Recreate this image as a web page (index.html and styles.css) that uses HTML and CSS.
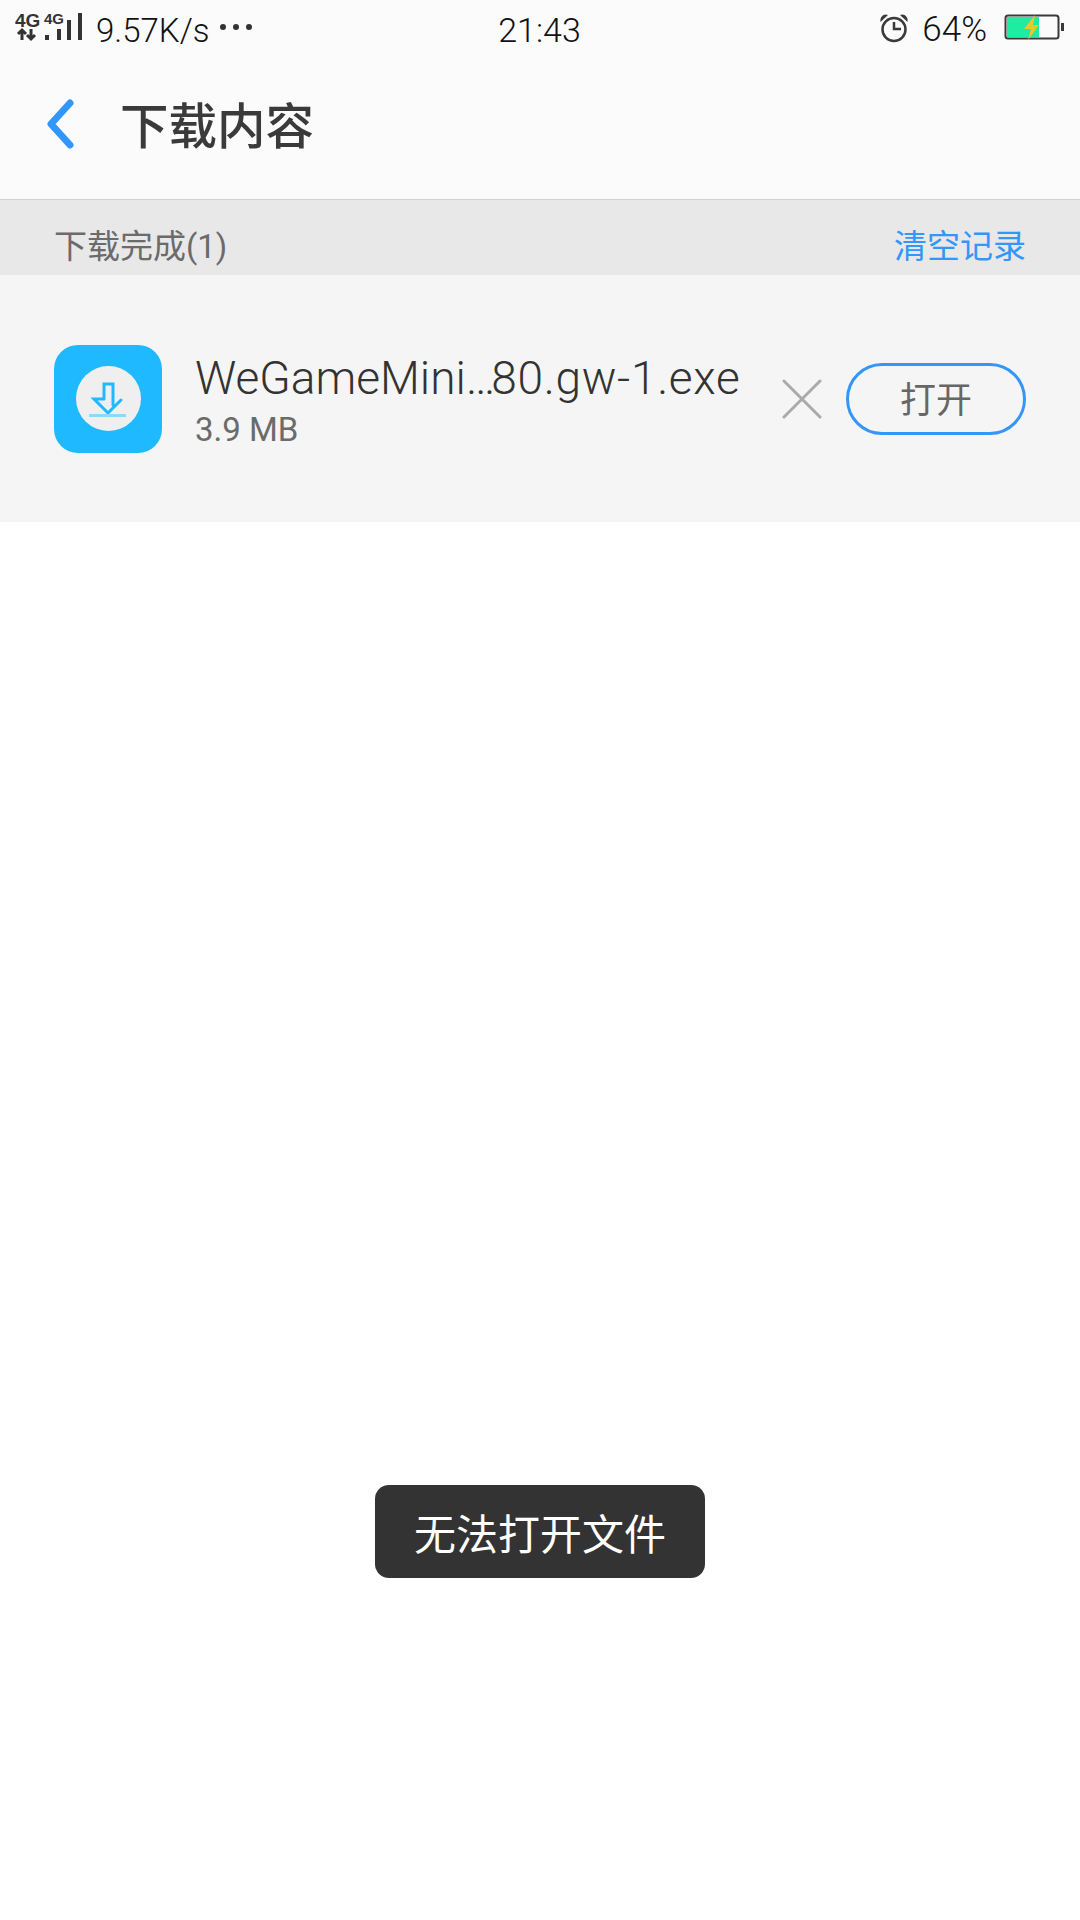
FILE: index.html
```html
<!DOCTYPE html>
<html lang="zh-CN">
<head>
    <meta charset="UTF-8">
    <meta name="viewport" content="width=device-width, initial-scale=1.0">
    <title>下载内容</title>
    <link rel="stylesheet" href="styles.css">
</head>
<body>
    <div class="page">
        <!-- Status bar -->
        <div class="status-bar">
            <div class="status-left">
                <svg class="signal-icon" width="70" height="44" viewBox="0 0 70 44">
                    <text x="0" y="23" class="net-big">4G</text>
                    <text x="29" y="20" class="net-small">4G</text>
                    <path d="M7 36V26M3 30L7 26L11 30" class="arrow"/>
                    <path d="M16 25V35M12 31L16 35L20 31" class="arrow"/>
                    <rect x="30" y="31" width="4" height="5" class="bar"/>
                    <rect x="42" y="25" width="4" height="11" class="bar"/>
                    <rect x="52" y="16" width="4" height="20" class="bar"/>
                    <rect x="63" y="9" width="4" height="27" class="bar"/>
                </svg>
                <span class="speed">9.57K/s</span>
                <span class="dots"><i></i><i></i><i></i></span>
            </div>
            <div class="clock">21:43</div>
            <div class="status-right">
                <svg class="alarm-icon" width="30" height="30" viewBox="0 0 30 30">
                    <circle cx="15" cy="16.500" r="11.500" class="alarm-ring"/>
                    <path d="M15 9V16H22" class="alarm-hand"/>
                    <path d="M1.500 9C0.500 4 5 0 9 2Z" class="alarm-bell"/>
                    <path d="M28.500 9C29.500 4 25 0 21 2Z" class="alarm-bell"/>
                </svg>
                <span class="percent">64%</span>
                <svg class="battery-icon" width="61" height="28" viewBox="0 0 61 28">
                    <rect x="2.500" y="1.500" width="53" height="23" rx="2.500" class="battery-case"/>
                    <rect x="4" y="3" width="32" height="20" class="battery-level"/>
                    <rect x="58" y="9" width="3" height="8" class="battery-tip"/>
                    <path d="M32 1L21 15H28L25 26L36 11H30Z" class="battery-bolt"/>
                </svg>
            </div>
        </div>

        <!-- Title bar -->
        <div class="title-bar">
            <svg class="back-icon" width="30" height="52" viewBox="0 0 30 52">
                <path d="M24 5L5 26L24 47"/>
            </svg>
            <h1>下载内容</h1>
        </div>

        <!-- Section head -->
        <div class="section-head">
            <span class="section-name">下载完成(1)</span>
            <span class="clear-link">清空记录</span>
        </div>

        <!-- Download row -->
        <div class="download-row">
            <div class="app-icon">
                <div class="app-icon-circle">
                    <svg width="42" height="42" viewBox="0 0 42 42">
                        <path d="M17 21V6H26V27M17 21H7L21 35L34 22" class="arrow-line"/>
                        <rect x="2" y="36" width="37" height="3" class="arrow-base"/>
                    </svg>
                </div>
            </div>
            <div class="file-info">
                <div class="file-name">WeGameMini…<span class="file-tail">80.gw-1.exe</span></div>
                <div class="file-size">3.9 MB</div>
            </div>
            <svg class="close-icon" width="40" height="40" viewBox="0 0 40 40">
                <path d="M2 2L38 38M38 2L2 38"/>
            </svg>
            <div class="open-button"><span>打开</span></div>
        </div>

        <!-- Empty area with toast -->
        <div class="content">
            <div class="toast">无法打开文件</div>
        </div>
    </div>
</body>
</html>
```

FILE: styles.css
```css
/* General */
* {
    box-sizing: border-box;
}

body {
    margin: 0;
    background-color: #ffffff;
    font-family: Roboto, "Noto Sans CJK SC", sans-serif;
}

.page {
    width: 1080px;
    height: 1920px;
    display: flex;
    flex-direction: column;
    overflow: hidden;
}

/* Status bar */
.status-bar {
    height: 60px;
    padding: 0 16px 0 15px;
    display: grid;
    grid-template-columns: 1fr auto 1fr;
    align-items: center;
    background-color: #fbfbfb;
    color: #111111;
    font-size: 33px;
}

.status-left,
.status-right {
    display: flex;
    align-items: center;
}

.status-right {
    justify-content: flex-end;
}

.signal-icon {
    margin-top: -8px;
}

.net-big {
    font-family: "Liberation Sans", sans-serif;
    font-size: 19px;
    font-weight: 700;
    fill: #333333;
}

.net-small {
    font-family: "Liberation Sans", sans-serif;
    font-size: 15px;
    font-weight: 700;
    fill: #333333;
}

.arrow {
    fill: none;
    stroke: #333333;
    stroke-width: 3;
}

.bar {
    fill: #333333;
}

.speed {
    margin-left: 11px;
    font-weight: 300;
}

.dots {
    display: flex;
    gap: 7px;
    margin-left: 10px;
    margin-bottom: 6px;
}

.dots i {
    width: 6px;
    height: 6px;
    border-radius: 50%;
    background-color: #333333;
}

.clock {
    margin-top: -1px;
    font-size: 34px;
    font-weight: 300;
}

.alarm-icon {
    margin-top: -4px;
}

.alarm-ring,
.alarm-hand {
    fill: none;
    stroke: #3a3a3a;
    stroke-width: 2.500;
}

.alarm-bell {
    fill: #3a3a3a;
}

.percent {
    margin-left: 13px;
    margin-top: -1px;
    font-size: 35px;
    font-weight: 300;
}

.battery-icon {
    margin-left: 16px;
    margin-top: -4px;
}

.battery-case {
    fill: none;
    stroke: #3a3a3a;
    stroke-width: 2;
}

.battery-level {
    fill: #1deda0;
}

.battery-tip {
    fill: #3a3a3a;
}

.battery-bolt {
    fill: #e9c72e;
}

/* Title bar */
.title-bar {
    height: 140px;
    padding: 0 0 0 46px;
    display: flex;
    align-items: center;
    background-color: #fbfbfb;
    border-bottom: 1px solid #d0d0d0;
}

.back-icon {
    margin-top: -11px;
}

.back-icon path {
    fill: none;
    stroke: #3296fa;
    stroke-width: 7;
    stroke-linecap: round;
    stroke-linejoin: round;
}

.title-bar h1 {
    margin: -14px 0 0 44px;
    font-size: 48.500px;
    font-weight: 500;
    color: #3a3a3a;
}

/* Section head */
.section-head {
    height: 75px;
    padding: 12px 54px 0;
    display: flex;
    justify-content: space-between;
    align-items: center;
    background-color: #e8e8e8;
    font-size: 33px;
}

.section-name {
    color: #6b6b6b;
}

.clear-link {
    color: #3296fa;
}

/* Download row */
.download-row {
    height: 247px;
    padding: 0 54px;
    display: flex;
    align-items: center;
    background-color: #f5f5f5;
}

.app-icon {
    width: 108px;
    height: 108px;
    flex-shrink: 0;
    border-radius: 24px;
    background-color: #1fb9ff;
    display: flex;
    justify-content: center;
    align-items: center;
}

.app-icon-circle {
    width: 65px;
    height: 65px;
    border-radius: 50%;
    background-color: #efefef;
    display: flex;
    justify-content: center;
    align-items: center;
}

.arrow-line {
    fill: none;
    stroke: #1fb9ff;
    stroke-width: 3;
    stroke-linecap: round;
}

.arrow-base {
    fill: #8fd8fb;
}

.file-info {
    margin-left: 33px;
    margin-top: 2px;
    flex: 1;
    white-space: nowrap;
}

.file-name {
    font-size: 46px;
    font-weight: 300;
    color: #333333;
}

.file-tail {
    margin-left: -4px;
    letter-spacing: 0.700px;
}

.file-size {
    font-size: 33px;
    color: #6b6b6b;
    margin-top: 5px;
}

.close-icon {
    flex-shrink: 0;
    margin-right: 24px;
}

.close-icon path {
    fill: none;
    stroke: #aaaaaa;
    stroke-width: 3;
    stroke-linecap: round;
}

.open-button {
    width: 180px;
    height: 72px;
    flex-shrink: 0;
    border: 3px solid #3296fa;
    border-radius: 36px;
    display: flex;
    justify-content: center;
    align-items: center;
    font-size: 36px;
    color: #666666;
}

.open-button span {
    margin-top: -3px;
}

/* Empty area with toast */
.content {
    flex: 1;
    display: flex;
    justify-content: center;
    align-items: flex-start;
    padding-top: 963px;
    background-color: #ffffff;
}

.toast {
    width: 330px;
    height: 93px;
    border-radius: 14px;
    background-color: #333333;
    color: #ffffff;
    font-size: 42px;
    display: flex;
    justify-content: center;
    align-items: center;
}
```
